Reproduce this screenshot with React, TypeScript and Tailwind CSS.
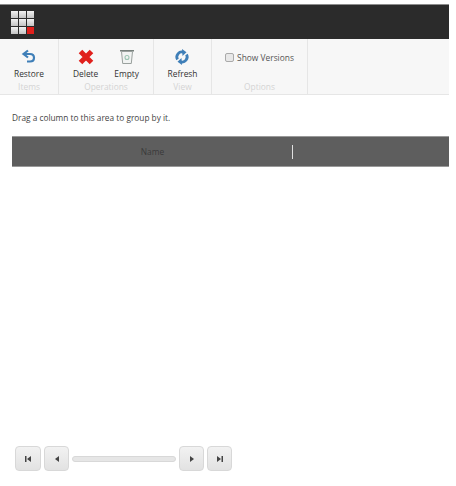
const font = { fontFamily: '"Open Sans", sans-serif' }

function RestoreIcon() {
    return (
        <svg width="16" height="16" viewBox="0 0 16 16" fill="none">
            <path d="M7 1.500 2.500 5 7 8.500" stroke="#3f7fb8" strokeWidth="2.200" />
            <path d="M3 5h6c2.500 0 4 1.600 4 3.700S11.500 12.500 9 12.500H6" stroke="#3f7fb8" strokeWidth="2.200" />
        </svg>
    )
}

function DeleteIcon() {
    return (
        <svg width="16" height="16" viewBox="0 0 16 16">
            <path d="M2.500 2.500 13.500 13.500M13.500 2.500 2.500 13.500" stroke="#e0201c" strokeWidth="5" />
        </svg>
    )
}

function EmptyIcon() {
    return (
        <svg width="14" height="16" viewBox="0 0 14 16" fill="none">
            <rect x="0" y="1" width="14" height="1.500" fill="#77807c" />
            <path d="M1.500 2.500h11l-1.200 12H2.700z" fill="#f1f3f2" stroke="#9aa19e" />
            <circle cx="7" cy="8.500" r="2" stroke="#9cc4b2" strokeWidth="1.100" />
        </svg>
    )
}

function RefreshIcon() {
    return (
        <svg width="16" height="16" viewBox="0 0 16 16" fill="none">
            <path d="M3.500 10.500A5 5 0 0 1 9.500 3.300" stroke="#3f7fb8" strokeWidth="2.800" />
            <path d="M8 0 12.500 3.300 8.500 7z" fill="#3f7fb8" />
            <path d="M12.500 5.500A5 5 0 0 1 6.500 12.700" stroke="#3f7fb8" strokeWidth="2.800" />
            <path d="M8 16 3.500 12.700 7.500 9z" fill="#3f7fb8" />
        </svg>
    )
}

function RibbonButton({ label, icon }: { label: string; icon: React.ReactNode }) {
    return (
        <div className="flex flex-col items-center">
            <div className="h-[16px] flex items-center justify-center">{icon}</div>
            <span className="mt-[3px] text-[8.400px] leading-[12px] text-[#333]">{label}</span>
        </div>
    )
}

function Group({ title, width, children }: { title: string; width: string; children: React.ReactNode }) {
    return (
        <div className={`${width} h-full border-r border-[#e6e6e6] flex flex-col items-center pt-[10px]`}>
            <div className="flex-1 flex justify-center gap-[16px]">{children}</div>
            <span className="text-[8.400px] leading-[12px] text-[#d4d4d4] mb-[1px]">{title}</span>
        </div>
    )
}

function PagerButton({ wide, children }: { wide?: boolean; children: React.ReactNode }) {
    return (
        <div className={`${wide ? 'w-[26px]' : 'w-[25px]'} h-[25px] rounded-[4px] border border-[#d8d8d8] bg-gradient-to-b from-[#f2f2f2] to-[#e2e2e2] flex items-center justify-center`}>
            <svg width="8" height="8" viewBox="0 0 8 8" fill="#444">{children}</svg>
        </div>
    )
}

export default function App() {
    return (
        <div className="w-[456px] h-[486px] bg-white overflow-hidden pt-[4px]" style={font}>
            <div className="w-[449px] h-[35px] bg-[#2b2b2b] border-t border-[#8c8c8c] pl-[11px] pt-[6px]">
                <div className="grid grid-cols-3 gap-[1px] w-[23px]">
                    {[0, 1, 2, 3, 4, 5, 6, 7].map((i) => (
                        <div key={i} className="h-[7px] bg-gradient-to-b from-[#f2f2f2] to-[#c4c4c4]" />
                    ))}
                    <div className="h-[7px] bg-[#e0201c]" />
                </div>
            </div>

            <div className="w-[449px] h-[56px] bg-[#f7f7f7] border-b border-[#e6e6e6] flex">
                <Group title="Items" width="w-[59px]">
                    <RibbonButton label="Restore" icon={<RestoreIcon />} />
                </Group>
                <Group title="Operations" width="w-[95px]">
                    <RibbonButton label="Delete" icon={<DeleteIcon />} />
                    <RibbonButton label="Empty" icon={<EmptyIcon />} />
                </Group>
                <Group title="View" width="w-[58px]">
                    <RibbonButton label="Refresh" icon={<RefreshIcon />} />
                </Group>
                <Group title="Options" width="w-[96px]">
                    <div className="flex items-start gap-[3px] mt-[3px] text-[8.400px] leading-[12px] text-[#555]">
                        <div className="w-[9px] h-[9px] mt-[1px] rounded-[2px] border border-[#aaa] bg-[#e8e8e8]" />
                        Show Versions
                    </div>
                </Group>
            </div>

            <p className="ml-[12px] mt-[17px] text-[8.300px] leading-[12px] text-[#444]">
                Drag a column to this area to group by it.
            </p>

            <div className="ml-[12px] mt-[12px] w-[437px] h-[31px] bg-[#5e5e5e] border-t border-b border-[#999] flex items-center">
                <span className="w-[280px] pl-[1px] pt-[2px] text-center text-[8.400px] text-[#3a3a3a]">Name</span>
                <div className="w-[1px] h-[14px] bg-[#e0e0e0]" />
            </div>

            <div className="ml-[15px] mt-[279px] flex items-center gap-[3px]">
                <PagerButton wide><path d="M1 1h1.500v6H1zM7 1v6L3 4z" /></PagerButton>
                <PagerButton><path d="M6 1v6L2 4z" /></PagerButton>
                <div className="w-[104px] h-[6px] rounded-full bg-[#e6e6e6] border border-[#d8d8d8]" />
                <PagerButton><path d="M2 1v6l4-3z" /></PagerButton>
                <PagerButton><path d="M1 1v6l4-3zM5.500 1H7v6H5.500z" /></PagerButton>
            </div>
        </div>
    )
}
